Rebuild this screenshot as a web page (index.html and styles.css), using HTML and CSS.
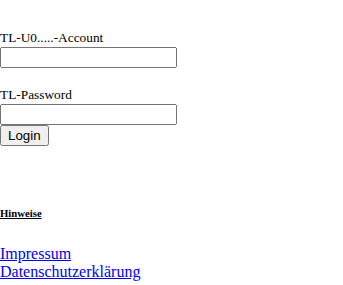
FILE: index.html
```html
<!DOCTYPE html>
<html>
<head>
<meta charset="utf-8">
<link rel="stylesheet" href="styles.css">
</head>
<body>
<form class="login">
  <label class="field">TL-U0.....-Account<input class="input" type="text"></label>
  <label class="field second">TL-Password<input class="input" type="password"></label>
  <button class="btn" type="button">Login</button>
</form>
<h6 class="note"><u>Hinweise</u></h6>
<nav class="links">
  <a href="#">Impressum</a>
  <a href="#">Datenschutzerklärung</a>
</nav>
</body>
</html>
```
FILE: styles.css
```css
body {
  margin: 0;
  font-family: "Liberation Serif", serif;
  font-size: 16px;
}
.login {
  display: flex;
  flex-direction: column;
  align-items: flex-start;
  padding-top: 30px;
}
.field {
  display: flex;
  flex-direction: column;
  align-items: flex-start;
  font-size: 13.33px;
  line-height: 16px;
}
.field.second {
  margin-top: 19px;
}
.input {
  margin: 1px 0 0 0;
  width: 177px;
  height: 21px;
  box-sizing: border-box;
  font-family: Arial, "Liberation Sans", sans-serif;
  font-size: 13.33px;
}
.btn {
  margin: 0;
  font-family: "Liberation Sans", Arial, sans-serif;
  font-size: 13.33px;
}
.note {
  font-size: 10.72px;
  margin: 61px 0 0 0;
  line-height: 13px;
}
.links {
  display: flex;
  flex-direction: column;
  align-items: flex-start;
  margin-top: 25px;
  line-height: 18px;
}
.links a {
  color: #0000ee;
}
```
